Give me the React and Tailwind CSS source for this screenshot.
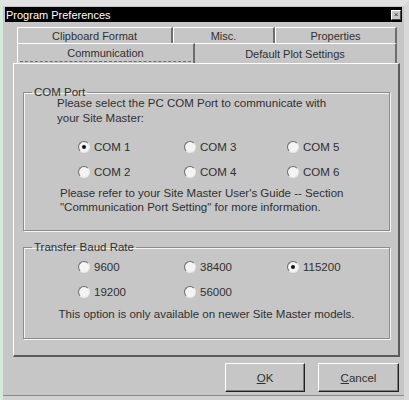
import React from 'react';

const Radio = ({ label, checked }) => (
	<div className="flex items-center h-[25px]">
		<span className="w-[12px] h-[12px] rounded-full bg-[#f4f4f4] border border-t-[#6a6a6a] border-l-[#6a6a6a] border-r-[#e8e8e8] border-b-[#e8e8e8] flex items-center justify-center">
			{checked && <span className="w-[4px] h-[4px] rounded-full bg-[#111]"></span>}
		</span>
		<span className="ml-[4px]">{label}</span>
	</div>
)

const Tab = ({ label, w }) => (
	<div className="h-full flex items-center justify-center border-t border-l border-white border-r-2 border-r-[#6d6d6d]" style={{ width: w }}>
		{label}
	</div>
)

const App = () => {
	return (
		<div className="w-[409px] h-[400px] bg-[#c6c6c6] border-l-[3px] border-l-[#d3ead6] border-t-[6px] border-t-[#e2e2e2] border-r-[5px] border-r-[#d8d8d8] flex flex-col text-[11.5px] leading-[14px] text-[#303030] font-['Liberation_Sans',Arial,sans-serif]">
			<div className="mt-[1px] ml-[2px] w-[397px] h-[15px] bg-black flex items-center justify-between pl-[1px] pr-[1px]">
				<span className="text-white text-[11px]">Program Preferences</span>
				<span className="w-[10px] h-[10px] bg-[#c8c8c8] border border-t-white border-l-white border-r-[#444] border-b-[#444] flex items-center justify-center text-[8px] leading-[8px] text-[#333]">×</span>
			</div>

			<div className="mt-[5px] ml-[14px] flex flex-col text-[11px]">
				<div className="flex h-[16px]">
					<Tab label="Clipboard Format" w={156} />
					<Tab label="Misc." w={102} />
					<Tab label="Properties" w={122} />
				</div>
				<div className="flex h-[20px]">
					<div className="w-[178px] h-full flex flex-col border-t border-l border-white border-r-2 border-r-[#6d6d6d]">
						<div className="flex-1 flex items-center justify-center">Communication</div>
						<div className="mx-[2px] mb-[1px] border-b border-dashed border-[#6d6d6d]"></div>
					</div>
					<div className="w-[202px] h-full flex items-center justify-center border-t border-white border-r-2 border-r-[#6d6d6d]">
						Default Plot Settings
					</div>
				</div>
			</div>

			<div className="ml-[10px] w-[387px] h-[294px] border-t border-l border-white border-r-2 border-b-2 border-r-[#5a5a5a] border-b-[#5a5a5a] pl-[9px] pt-[21px] flex flex-col gap-[9px]">
				<fieldset className="w-[367px] h-[146px] border border-[#8c8c8c] shadow-[inset_1px_1px_0_#f4f4f4,1px_1px_0_#f4f4f4] flex flex-col">
					<legend className="ml-[8px] px-[2px]">COM Port</legend>
					<div className="pl-[33px] leading-[15px] -mt-[3px]">
						<div>Please select the PC COM Port to communicate with</div>
						<div>your Site Master:</div>
					</div>
					<div className="mt-[8px] ml-[54px] grid grid-cols-[106px_103px_90px]">
						<Radio label="COM 1" checked />
						<Radio label="COM 3" />
						<Radio label="COM 5" />
						<Radio label="COM 2" />
						<Radio label="COM 4" />
						<Radio label="COM 6" />
					</div>
					<div className="pl-[36px] mt-[2px] leading-[14px]">
						<div>Please refer to your Site Master User's Guide  -- Section</div>
						<div>"Communication Port Setting" for more information.</div>
					</div>
				</fieldset>

				<fieldset className="w-[367px] h-[99px] border border-[#8c8c8c] shadow-[inset_1px_1px_0_#f4f4f4,1px_1px_0_#f4f4f4] flex flex-col">
					<legend className="ml-[8px] px-[2px]">Transfer Baud Rate</legend>
					<div className="ml-[54px] grid grid-cols-[106px_103px_90px] grid-rows-[25px_23px]">
						<Radio label="9600" />
						<Radio label="38400" />
						<Radio label="115200" checked />
						<Radio label="19200" />
						<Radio label="56000" />
					</div>
					<div className="mt-[5px] text-center">This option is only available on newer Site Master models.</div>
				</fieldset>
			</div>

			<div className="mt-[6px] flex justify-end gap-[13px] pr-[5px]">
				<button className="w-[80px] h-[29px] bg-[#c6c6c6] border border-t-white border-l-white border-r-[#222] border-b-[#222] shadow-[inset_-1px_-1px_0_#7d7d7d]">
					<span className="underline">O</span>K
				</button>
				<button className="w-[81px] h-[29px] bg-[#c6c6c6] border border-t-white border-l-white border-r-[#222] border-b-[#222] shadow-[inset_-1px_-1px_0_#7d7d7d]">
					<span className="underline">C</span>ancel
				</button>
			</div>

			<div className="mt-[3px] h-[1px] bg-[#8a8a8a]"></div>
			<div className="flex-1 bg-[#d0d0d0]"></div>
		</div>
	);
};

export default App;
